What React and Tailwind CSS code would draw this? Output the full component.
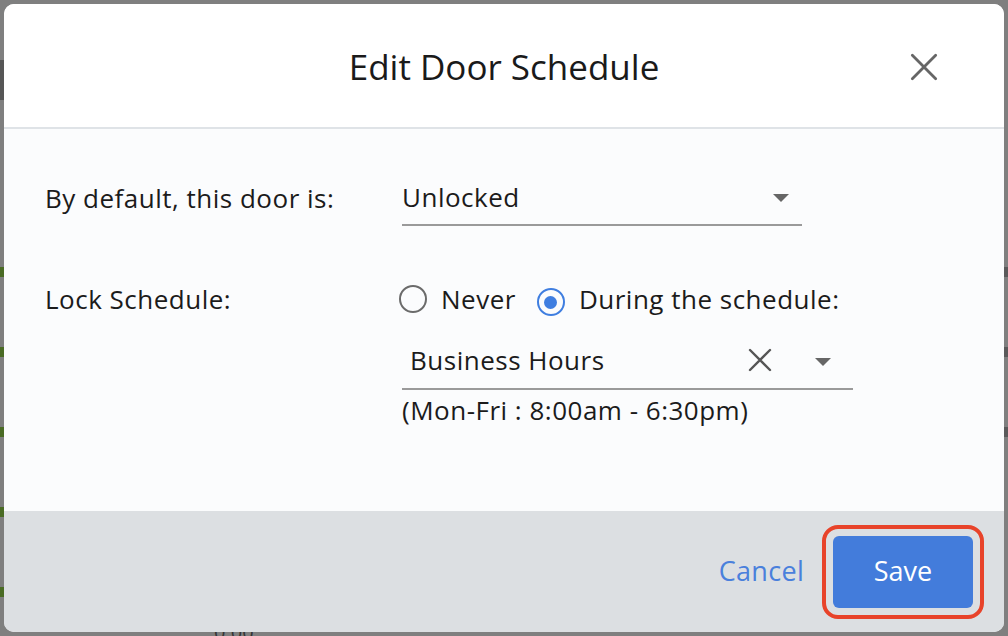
import React from "react";

function CaretDown({ className }) {
	return (
		<svg viewBox="0 0 16 8" className={className} fill="currentColor">
			<path d="M0 0h16L8 8z" />
		</svg>
	);
}

function Cross({ className, strokeWidth = 2.5 }) {
	return (
		<svg viewBox="0 0 24 24" className={className} fill="none" stroke="currentColor" strokeWidth={strokeWidth} strokeLinecap="round">
			<path d="M2 2L22 22M22 2L2 22" />
		</svg>
	);
}

function Radio({ checked }) {
	return (
		<span
			className={`inline-flex h-[28px] w-[28px] shrink-0 items-center justify-center rounded-full border-[2.5px] ${
				checked ? "border-[#3f7ee0]" : "border-[#6b6b6b]"
			}`}
		>
			{checked ? <span className="h-[13px] w-[13px] rounded-full bg-[#3f7ee0]" /> : null}
		</span>
	);
}

export default function App() {
	const rows = [0, 1, 2, 3, 4];

	return (
		<div className="relative h-[636px] w-[1008px] overflow-hidden bg-[#7f7f7f] font-['Open_Sans',sans-serif] text-[#1b1b1b]">
			{/* page behind the dialog */}
			<div className="flex h-full flex-col pt-[60px]">
				<div className="h-[40px] w-[4px] bg-[#565656]" />
				<div className="mt-[167px] flex flex-col gap-[70px]">
					{rows.map((r) => (
						<div key={r} className="flex h-[10px] justify-between">
							<div className="w-[4px] bg-[#4a6b24]" />
							{r < 3 ? <div className="w-[4px] bg-[#5a5a5a]" /> : null}
						</div>
					))}
				</div>
				<div className="mt-auto pl-[214px] text-[20px] leading-[8px] text-[#333]">0:00</div>
			</div>

			{/* dialog */}
			<div className="absolute inset-[4px] flex flex-col overflow-hidden rounded-[10px] bg-[#fbfcfd]">
				<div className="relative flex h-[125px] shrink-0 items-center justify-center border-b-2 border-[#dfe3e7] bg-white">
					<h1 className="pt-[2px] text-[35px] font-normal leading-[44px] text-[#1a1a1a]">Edit Door Schedule</h1>
					<button type="button" className="absolute right-[66px] top-[49px] text-[#666]">
						<Cross className="h-[28px] w-[28px]" strokeWidth={2.4} />
					</button>
				</div>

				<div className="flex flex-1 flex-col pl-[41px] pt-[53px] text-[26px] tracking-[0.5px]">
					<div className="flex items-start">
						<div className="w-[357px] leading-[32px]">By default, this door is:</div>
						<div className="w-[400px]">
							<div className="flex h-[44px] items-start justify-between border-b-2 border-[#9a9a9a] pr-[13px]">
								<span className="leading-[30px]">Unlocked</span>
								<CaretDown className="mt-[12px] h-[8px] w-[16px] text-[#666]" />
							</div>
						</div>
					</div>

					<div className="mt-[57px] flex items-start">
						<div className="w-[357px] leading-[32px]">Lock Schedule:</div>
						<div className="w-[451px]">
							<div className="-ml-[3px] flex h-[32px] items-center">
								<Radio />
								<span className="ml-[14px]">Never</span>
								<span className="ml-[21px]">
									<Radio checked />
								</span>
								<span className="ml-[14px]">During the schedule:</span>
							</div>
							<div className="mt-[29px] flex h-[46px] items-start border-b-2 border-[#9a9a9a] pl-[8px] pr-[22px]">
								<span className="flex-1 leading-[32px]">Business Hours</span>
								<Cross className="mt-[4px] h-[24px] w-[24px] text-[#555]" strokeWidth={2.4} />
								<CaretDown className="ml-[43px] mt-[14px] h-[8px] w-[16px] text-[#666]" />
							</div>
							<div className="mt-[4px] leading-[32px]">(Mon-Fri : 8:00am - 6:30pm)</div>
						</div>
					</div>
				</div>

				<div className="flex h-[121px] shrink-0 items-center justify-end gap-[18px] bg-[#dcdfe2] pr-[20px]">
					<button type="button" className="text-[27px] tracking-[0.3px] text-[#4a80dc]">
						Cancel
					</button>
					<div className="rounded-[16px] border-[4px] border-[#e8432a] p-[7px]">
						<button
							type="button"
							className="h-[72px] w-[140px] rounded-[6px] bg-[#437cdb] text-[27px] text-white"
						>
							Save
						</button>
					</div>
				</div>
			</div>
		</div>
	);
}
